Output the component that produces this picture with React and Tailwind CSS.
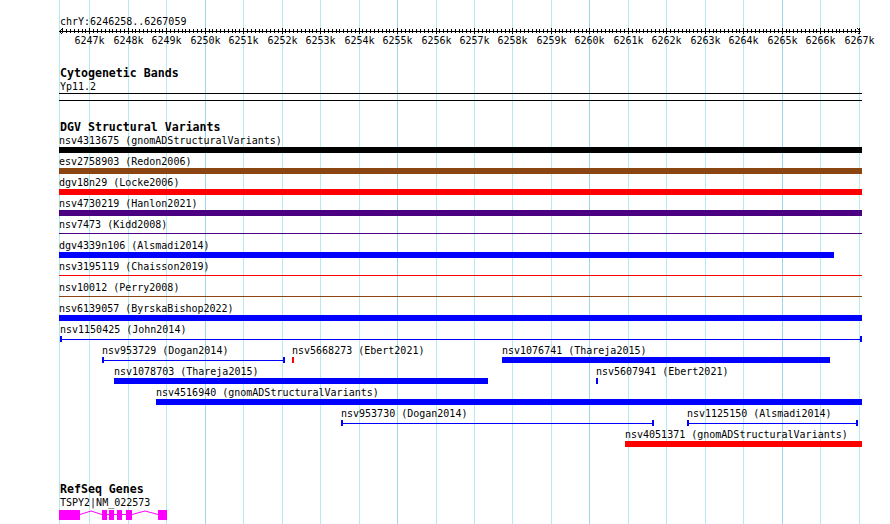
import React from "react";

// track area runs from x=59 to x=862
const ORIGIN = 59;
const kx = (kb) => 89.3 + (kb - 6247) * 38.47;

const BLUE = "bg-[#0000ff]";
const RED = "bg-[#ff0000]";
const BROWN = "bg-[#8b4513]";
const INDIGO = "bg-[#4b0082]";
const BLACK = "bg-black";

const full = { s: 59, e: 862 };

const ROWS = [
  [{ label: "nsv4313675 (gnomADStructuralVariants)", ...full, bg: BLACK, kind: "bar" }],
  [{ label: "esv2758903 (Redon2006)", ...full, bg: BROWN, kind: "bar" }],
  [{ label: "dgv18n29 (Locke2006)", ...full, bg: RED, kind: "bar" }],
  [{ label: "nsv4730219 (Hanlon2021)", ...full, bg: INDIGO, kind: "bar" }],
  [{ label: "nsv7473 (Kidd2008)", ...full, bg: INDIGO, kind: "line" }],
  [{ label: "dgv4339n106 (Alsmadi2014)", s: 59, e: 834, bg: BLUE, kind: "bar" }],
  [{ label: "nsv3195119 (Chaisson2019)", ...full, bg: RED, kind: "line" }],
  [{ label: "nsv10012 (Perry2008)", ...full, bg: BROWN, kind: "line" }],
  [{ label: "nsv6139057 (ByrskaBishop2022)", ...full, bg: BLUE, kind: "bar" }],
  [{ label: "nsv1150425 (John2014)", s: 60, e: 862, bg: BLUE, kind: "capped" }],
  [
    { label: "nsv953729 (Dogan2014)", s: 102, e: 285, bg: BLUE, kind: "capped" },
    { label: "nsv5668273 (Ebert2021)", s: 292, e: 294, bg: RED, kind: "bar" },
    { label: "nsv1076741 (Thareja2015)", s: 502, e: 830, bg: BLUE, kind: "bar" },
  ],
  [
    { label: "nsv1078703 (Thareja2015)", s: 114, e: 488, bg: BLUE, kind: "bar" },
    { label: "nsv5607941 (Ebert2021)", s: 596, e: 598, bg: BLUE, kind: "bar" },
  ],
  [{ label: "nsv4516940 (gnomADStructuralVariants)", s: 156, e: 862, bg: BLUE, kind: "bar" }],
  [
    { label: "nsv953730 (Dogan2014)", s: 341, e: 654, bg: BLUE, kind: "capped" },
    { label: "nsv1125150 (Alsmadi2014)", s: 687, e: 858, bg: BLUE, kind: "capped" },
  ],
  [{ label: "nsv4051371 (gnomADStructuralVariants)", s: 625, e: 862, bg: RED, kind: "bar" }],
];

const GRID = [59, ...Array.from({ length: 21 }, (_, i) => Math.round(kx(6247 + i)))];

const Grid = () => (
  <div className="absolute inset-0">
    {GRID.map((x, i) => {
      const major = i > 0 && (i - 1) % 5 === 3;
      return (
        <div
          key={i}
          className={`absolute top-0 bottom-0 w-px ${major ? "bg-[#9bd6ea]" : "bg-[#b4eaf0]"}`}
          style={{ left: x }}
        />
      );
    })}
  </div>
);

const Ruler = () => {
  const ticks = [];
  for (let j = -7; j <= 200; j++) {
    const x = Math.round(kx(6247 + j / 10) - ORIGIN);
    const major = j % 10 === 0;
    ticks.push(
      <rect key={j} x={x} y={major ? 0 : 1} width="1" height={major ? 6 : 4} fill="#000" />
    );
  }
  return (
    <svg width="803" height="6" className="block" shapeRendering="crispEdges">
      <rect x="0" y="3" width="802" height="1" fill="#000" />
      {ticks}
      <path d="M0.5 3.5 L3.5 0.5 M0.5 3.5 L3.5 6.5" stroke="#000" fill="none" />
      <path d="M801.5 3.5 L798.5 0.5 M801.5 3.5 L798.5 6.5" stroke="#000" fill="none" />
    </svg>
  );
};

const Feature = ({ f }) => {
  const left = f.s - ORIGIN;
  const width = f.e - f.s;
  return (
    <>
      <div className="absolute top-0 leading-[13px] whitespace-nowrap" style={{ left }}>
        {f.label}
      </div>
      <div className="absolute top-[13px] h-[6px]" style={{ left, width }}>
        {f.kind === "bar" && <div className={`h-full ${f.bg}`} />}
        {f.kind === "line" && <div className={`mt-[2px] h-px ${f.bg}`} />}
        {f.kind === "capped" && (
          <div className="relative h-full">
            <div className={`absolute left-0 right-0 top-[3px] h-px ${f.bg}`} />
            <div className={`absolute left-0 top-0 h-full w-[2px] ${f.bg}`} />
            <div className={`absolute right-0 top-0 h-full w-[2px] ${f.bg}`} />
          </div>
        )}
      </div>
    </>
  );
};

const Gene = () => {
  const exons = [
    [59, 80],
    [102, 107],
    [109, 114],
    [117, 122],
    [126, 132],
    [158, 167],
  ];
  return (
    <svg width="120" height="10" className="block mt-px">
      <g shapeRendering="crispEdges">
        {exons.map(([a, b]) => (
          <rect key={a} x={a - ORIGIN} y="0" width={b - a} height="10" fill="#ff00ff" />
        ))}
        <rect x="48" y="4" width="19" height="1" fill="#ff00ff" />
      </g>
      <polyline points="21,4.5 32,1 43,4.5" stroke="#ff00ff" fill="none" />
      <polyline points="73,4.5 86,1 99,4.5" stroke="#ff00ff" fill="none" />
    </svg>
  );
};

export default function App() {
  return (
    <div className="relative w-[890px] h-[524px] bg-white overflow-hidden text-black font-['DejaVu_Sans_Mono',monospace] text-[10px]">
      <Grid />

      <div className="relative pl-[59px] w-[862px]">
        <div className="pt-[16px] pl-px leading-[12px]">chrY:6246258..6267059</div>
        <Ruler />

        <div className="relative h-[13px] leading-[13px]">
          {Array.from({ length: 21 }, (_, i) => (
            <span
              key={i}
              className="absolute top-0 -translate-x-1/2 whitespace-nowrap"
              style={{ left: Math.round(kx(6247 + i)) - ORIGIN + 0.5 }}
            >
              {6247 + i}k
            </span>
          ))}
        </div>

        <div className="mt-[20px] pl-px font-bold text-[11.6px] leading-[13px]">Cytogenetic Bands</div>
        <div className="pl-px leading-[13px]">Yp11.2</div>
        <div className="h-[8px] border-y border-black" />

        <div className="mt-[20px] pl-px font-bold text-[11.6px] leading-[13px]">DGV Structural Variants</div>
        <div className="flex flex-col">
          {ROWS.map((row, i) => (
            <div key={i} className="relative h-[21px]">
              {row.map((f) => (
                <Feature key={f.label} f={f} />
              ))}
            </div>
          ))}
        </div>

        <div className="mt-[34px] pl-px font-bold text-[11.6px] leading-[13px]">RefSeq Genes</div>
        <div className="pl-px leading-[13px]">TSPY2|NM_022573</div>
        <Gene />
      </div>
    </div>
  );
}
